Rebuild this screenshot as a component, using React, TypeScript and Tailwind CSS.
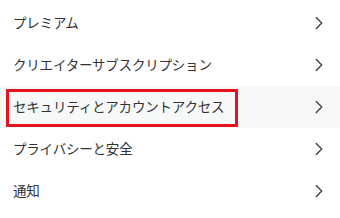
import { ChevronRight } from 'lucide-react';

const items = [
  'プレミアム',
  'クリエイターサブスクリプション',
  'セキュリティとアカウントアクセス',
  'プライバシーと安全',
  '通知',
];

export default function App() {
  return (
    <div
      className="w-[340px] h-[218px] bg-white pt-[2px] overflow-hidden"
      style={{ fontFamily: '"Noto Sans CJK JP", "Noto Sans", sans-serif' }}
    >
      {items.map((label, i) => {
        const active = i === 2;
        return (
          <div
            key={label}
            className={`relative flex items-center justify-between h-[42px] pl-[13px] pr-[10px] ${active ? 'bg-[#f7f9f9]' : ''}`}
          >
            <span className="text-[13.5px] text-[#333] leading-none tracking-[-0.2px]">{label}</span>
            <ChevronRight size={22} strokeWidth={1.5} className="text-[#444]" />
            {active && (
              <div className="absolute left-[6px] top-[3px] w-[232px] h-[38px] border-[3px] border-[#e3141e]" />
            )}
          </div>
        );
      })}
    </div>
  );
}
